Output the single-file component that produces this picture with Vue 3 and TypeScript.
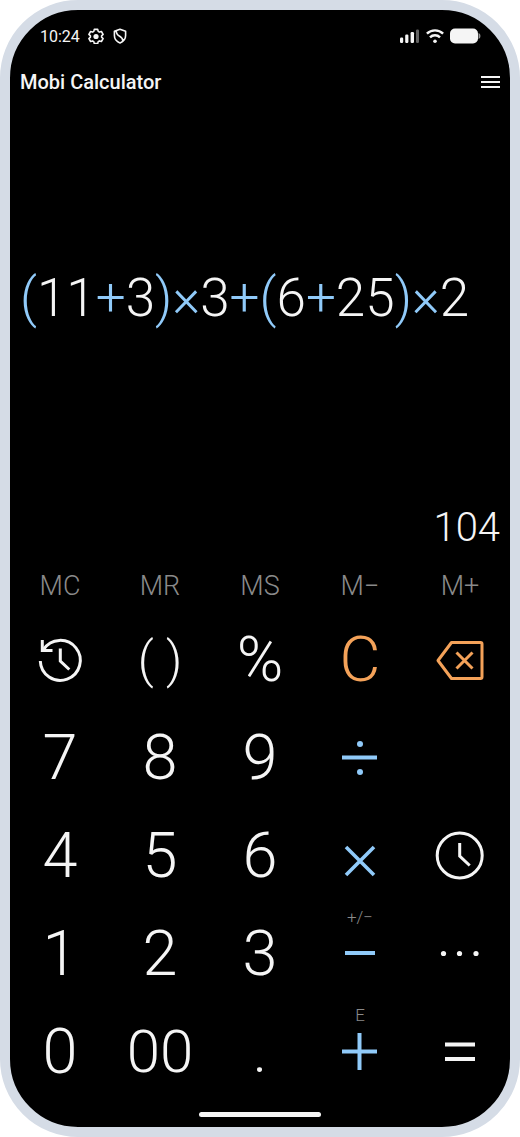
<script setup lang="ts">
import { computed, ref } from 'vue'

interface Key {
  id: string
  label: string
  text?: string
  icon?: string
  hint?: string
  tone?: string
  size?: string
}

const expression = ref('(11+3)×3+(6+25)×2')
const memory = ref(0)

const memoryKeys = ['MC', 'MR', 'MS', 'M−', 'M+']

const keys: Key[] = [
  { id: 'history', label: 'History', icon: 'history' },
  { id: '()', label: 'Parentheses', text: '( )', size: 'paren' },
  { id: '%', label: 'Percent', text: '%' },
  { id: 'C', label: 'Clear', text: 'C', tone: 'orange' },
  { id: 'back', label: 'Backspace', icon: 'back', tone: 'orange' },
  { id: '7', label: '7', text: '7' },
  { id: '8', label: '8', text: '8' },
  { id: '9', label: '9', text: '9' },
  { id: '÷', label: 'Divide', icon: 'divide', tone: 'blue' },
  { id: '', label: '' },
  { id: '4', label: '4', text: '4' },
  { id: '5', label: '5', text: '5' },
  { id: '6', label: '6', text: '6' },
  { id: '×', label: 'Multiply', icon: 'times', tone: 'blue' },
  { id: 'time', label: 'Time', icon: 'clock' },
  { id: '1', label: '1', text: '1' },
  { id: '2', label: '2', text: '2' },
  { id: '3', label: '3', text: '3' },
  { id: '−', label: 'Subtract', icon: 'minus', hint: '+/−', tone: 'blue' },
  { id: 'more', label: 'More', icon: 'more' },
  { id: '0', label: '0', text: '0' },
  { id: '00', label: '00', text: '00', size: 'double' },
  { id: '.', label: 'Decimal point', text: '.', size: 'double' },
  { id: '+', label: 'Add', icon: 'plus', hint: 'E', tone: 'blue' },
  { id: '=', label: 'Equals', icon: 'equals' },
]

const tokens = computed(() => expression.value.match(/[\d.]+|[^\d.]/g) ?? [])

function evaluate(list: string[]): number {
  let i = 0
  const atom = (): number => {
    const t = list[i++]
    if (t === '(') {
      const v = sum()
      i++
      return v
    }
    if (t === '−') return -atom()
    return Number(t)
  }
  const percent = (): number => {
    let v = atom()
    while (list[i] === '%') {
      i++
      v /= 100
    }
    return v
  }
  const product = (): number => {
    let v = percent()
    while (list[i] === '×' || list[i] === '÷') v = list[i++] === '×' ? v * percent() : v / percent()
    return v
  }
  const sum = (): number => {
    let v = product()
    while (list[i] === '+' || list[i] === '−') v = list[i++] === '+' ? v + product() : v - product()
    return v
  }
  return sum()
}

const result = computed(() => {
  if (!tokens.value.length) return ''
  const v = evaluate(tokens.value)
  return Number.isFinite(v) ? String(Number(v.toFixed(10))).replace('-', '−') : ''
})

function press(id: string) {
  const text = expression.value
  if (id === 'C') expression.value = ''
  else if (id === 'back') expression.value = text.slice(0, -1)
  else if (id === '=') expression.value = result.value
  else if (id === '()') {
    const open = text.split('(').length > text.split(')').length
    expression.value += open && /[\d)%]$/.test(text) ? ')' : '('
  } else if (/^[\d.%÷×−+]+$/.test(id)) expression.value += id
}

function pressMemory(id: string) {
  const value = Number(result.value.replace('−', '-')) || 0
  if (id === 'MC') memory.value = 0
  else if (id === 'MR') expression.value += String(memory.value).replace('-', '−')
  else if (id === 'MS') memory.value = value
  else memory.value += id === 'M+' ? value : -value
}
</script>

<template>
  <main class="phone">
    <div class="status">
      <div class="status-side">
        <span class="time">10:24</span>
        <svg class="status-icon" viewBox="0 0 16 16" aria-hidden="true">
          <path d="M6.3 1.4h3.4l.5 2 1.2.7 2-.6 1.7 2.9-1.5 1.4v1.4l1.5 1.4-1.7 2.9-2-.6-1.2.7-.5 2H6.3l-.5-2-1.2-.7-2 .6L.9 10.6l1.5-1.4V7.8L.9 6.4l1.7-2.9 2 .6 1.2-.7z" fill="none" stroke="currentColor" stroke-width="1.6" stroke-linejoin="round" />
          <circle cx="8" cy="8.5" r="2.6" fill="currentColor" />
        </svg>
        <svg class="status-icon" viewBox="0 0 16 16" aria-hidden="true">
          <path d="M8 1.2 2.4 3.3v4.2c0 3.4 2.3 6.2 5.6 7.5 3.3-1.3 5.6-4.1 5.6-7.5V3.3zM4.3 2.6c-.2 3 1 4.3 3.4 5.7 2.2 1.3 3.2 2.7 3.1 4.7" fill="none" stroke="currentColor" stroke-width="1.6" stroke-linejoin="round" />
        </svg>
      </div>
      <div class="status-side right">
        <svg class="signal" viewBox="0 0 20 16" aria-hidden="true">
          <g fill="currentColor">
            <rect x="0" y="9.5" width="3.2" height="5.5" rx="1.2" />
            <rect x="5.2" y="6.5" width="3.2" height="8.5" rx="1.2" />
            <rect x="10.6" y="4" width="3.4" height="11" rx="1.2" />
            <rect x="16" y="1.5" width="3" height="13.5" rx="1.2" opacity="0.4" />
          </g>
        </svg>
        <svg class="wifi" viewBox="0 0 18 16" aria-hidden="true">
          <g fill="none" stroke="currentColor" stroke-width="2.4">
            <path d="M.9 5.7a11.5 11.5 0 0 1 16.2 0" />
            <path d="M4 9.3a7.1 7.1 0 0 1 10 0" />
          </g>
          <circle cx="9" cy="13.2" r="1.8" fill="currentColor" />
        </svg>
        <svg class="battery" viewBox="0 0 31 16" aria-hidden="true">
          <rect x="0" y="0.5" width="28" height="15" rx="5" fill="currentColor" />
          <path d="M28.5 5q2 .3 2 3t-2 3z" fill="currentColor" opacity="0.6" />
        </svg>
      </div>
    </div>

    <header class="header">
      <h1>Mobi Calculator</h1>
      <button class="menu" type="button" aria-label="Menu">
        <svg viewBox="0 0 20 14" aria-hidden="true">
          <path d="M1 2h19M1 7h19M1 12h19" stroke="currentColor" stroke-width="2" />
        </svg>
      </button>
    </header>

    <section class="display" aria-label="Expression">
      <p class="expression"><span v-for="(t, i) in tokens" :key="i" :class="{ operator: !/\d/.test(t) }">{{ t }}</span></p>
    </section>
    <output class="result">{{ result }}</output>

    <div class="memory">
      <button v-for="m in memoryKeys" :key="m" type="button" @click="pressMemory(m)">{{ m }}</button>
    </div>

    <div class="pad">
      <template v-for="(key, i) in keys" :key="i">
        <span v-if="!key.id"></span>
        <button v-else type="button" class="key" :class="[key.tone, key.size]" :aria-label="key.label" @click="press(key.id)">
          <small v-if="key.hint" class="hint">{{ key.hint }}</small>
          <template v-if="key.text">{{ key.text }}</template>
          <svg v-else viewBox="0 0 50 50" aria-hidden="true">
            <g fill="none" stroke="currentColor" stroke-width="3">
              <g v-if="key.icon === 'history'">
                <path d="M5.3 26A20 20 0 1 0 8.5 14.5" />
                <path d="M7.3 5V15.5H17.5M25.3 13.5v12.5l9 8.5" />
              </g>
              <g v-else-if="key.icon === 'back'" stroke-linejoin="round">
                <path d="M16.5 7.5h29q1.5 0 1.5 1.5v33q0 1.5-1.5 1.5h-29L3 25.5z" />
                <path d="M21.5 17.5l16 16M37.5 17.5l-16 16" />
              </g>
              <g v-else-if="key.icon === 'clock'">
                <circle cx="24.7" cy="24.5" r="22.5" />
                <path d="M24.7 12v13l10 9.5" />
              </g>
              <g v-else-if="key.icon === 'divide'">
                <path d="M7 24.5h35" stroke-width="4" />
                <circle cx="25" cy="11" r="3" fill="currentColor" stroke="none" />
                <circle cx="25" cy="39" r="3" fill="currentColor" stroke="none" />
              </g>
              <path v-else-if="key.icon === 'times'" d="M11 16l28 28M39 16 11 44" stroke-width="3.6" />
              <path v-else-if="key.icon === 'minus'" d="M10 24h30" stroke-width="4" />
              <path v-else-if="key.icon === 'plus'" d="M7 24.5h35M24.5 6v37" stroke-width="4" />
              <path v-else-if="key.icon === 'equals'" d="M10 17.5h30M10 32h30" stroke-width="4" />
              <g v-else fill="currentColor" stroke="none">
                <circle cx="8.5" cy="24.5" r="2.6" />
                <circle cx="24.5" cy="24.5" r="2.6" />
                <circle cx="41" cy="24.5" r="2.6" />
              </g>
            </g>
          </svg>
        </button>
      </template>
    </div>

    <div class="home"><span></span></div>
  </main>
</template>

<style scoped>
.phone {
  box-sizing: border-box;
  min-height: 100vh;
  display: flex;
  flex-direction: column;
  border: 10px solid #d5dce6;
  border-radius: 78px;
  background: #000;
  color: #f5f5f5;
  font-family: Roboto, "Liberation Sans", sans-serif;
  font-weight: 300;
  overflow: hidden;
}
button {
  margin: 0;
  padding: 0;
  border: 0;
  background: none;
  color: inherit;
  font: inherit;
  cursor: pointer;
}
svg {
  display: block;
}
.status {
  height: 52px;
  padding: 0 29px 0 30px;
  display: flex;
  align-items: center;
  justify-content: space-between;
}
.status-side {
  display: flex;
  align-items: center;
  gap: 8px;
}
.right {
  gap: 6px;
}
.time {
  font-size: 16px;
  font-weight: 400;
}
.status-icon {
  width: 16px;
  height: 16px;
}
.signal {
  width: 20px;
  height: 16px;
}
.wifi {
  width: 18px;
  height: 16px;
}
.battery {
  width: 31px;
  height: 16px;
}
.header {
  height: 39px;
  padding: 0 10px;
  display: flex;
  align-items: center;
  justify-content: space-between;
}
h1 {
  margin: 0;
  font-size: 20px;
  font-weight: 500;
}
.menu svg {
  width: 20px;
  height: 14px;
}
.display {
  flex: 1;
  padding: 0 10px;
  display: flex;
  align-items: center;
}
.expression {
  margin: 0;
  font-size: 53px;
  line-height: 64px;
  overflow-wrap: anywhere;
}
.operator,
.blue {
  color: #90caf9;
}
.orange {
  color: #f4a259;
}
.result {
  min-height: 66px;
  padding: 0 10px;
  font-size: 40px;
  line-height: 66px;
  text-align: right;
}
.memory {
  display: grid;
  grid-template-columns: repeat(5, 1fr);
  height: 50px;
  font-size: 27px;
  color: #8a8a8a;
}
.pad {
  display: grid;
  grid-template-columns: repeat(5, 1fr);
  grid-auto-rows: 98px;
}
.key {
  position: relative;
  display: flex;
  align-items: center;
  justify-content: center;
  font-size: 63px;
  line-height: 98px;
}
.key svg {
  width: 50px;
  height: 50px;
}
.key.paren {
  font-size: 50px;
}
.key.double {
  font-size: 60px;
}
.hint {
  position: absolute;
  top: 2px;
  left: 0;
  right: 0;
  font-size: 17px;
  line-height: 20px;
  color: #8a8a8a;
}
.home {
  height: 26px;
  display: flex;
  align-items: center;
  justify-content: center;
}
.home span {
  width: 122px;
  height: 5px;
  border-radius: 3px;
  background: #f5f5f5;
}
</style>

<style>
body {
  margin: 0;
  background: #fff;
}
</style>
